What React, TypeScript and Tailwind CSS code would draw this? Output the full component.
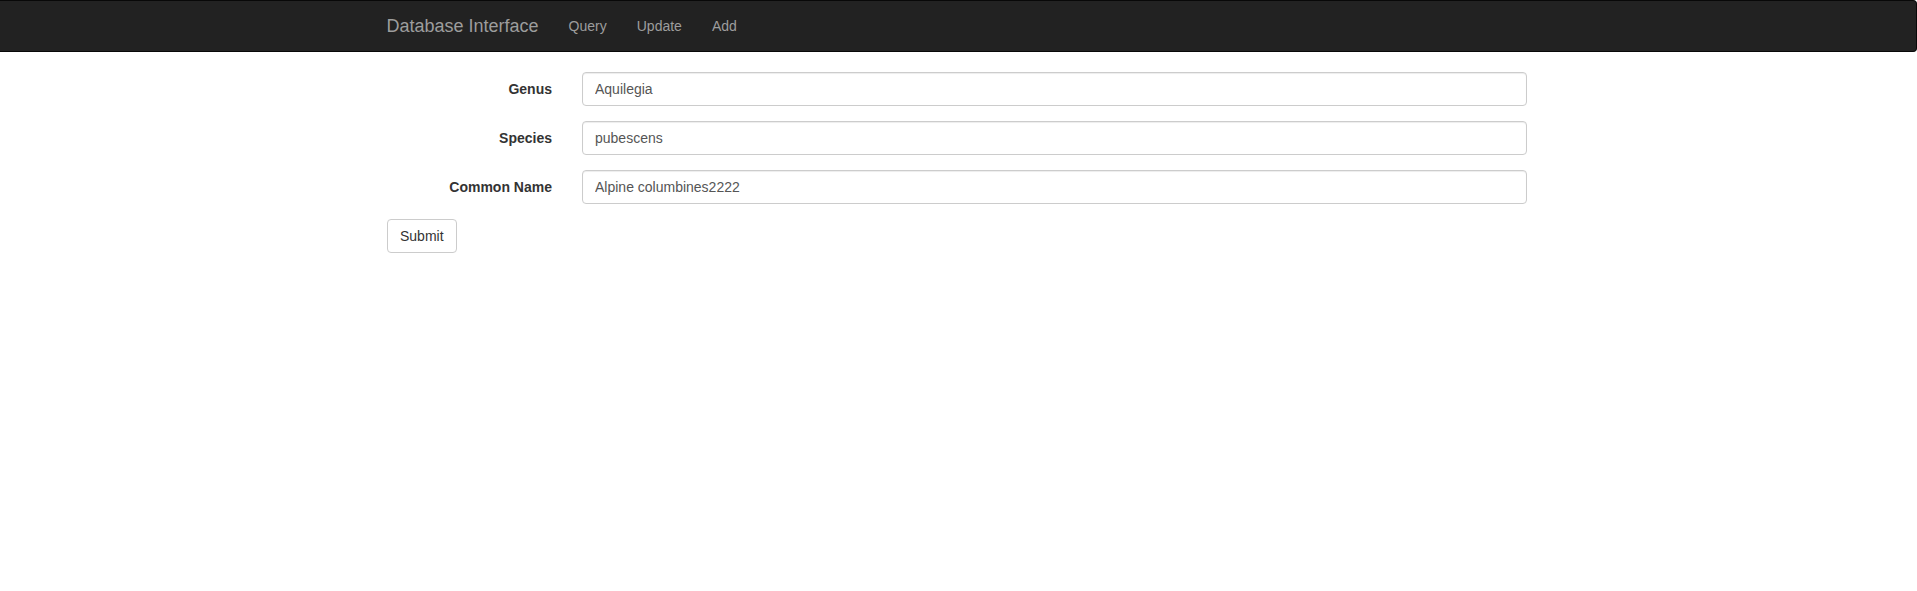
import React from "react"

const fields = [
  { label: "Genus", value: "Aquilegia" },
  { label: "Species", value: "pubescens" },
  { label: "Common Name", value: "Alpine columbines2222" },
]

export default function App(): React.ReactElement {
  return (
    <div className="min-h-[591px] bg-white pr-[3px] font-['Liberation_Sans',Arial,sans-serif] text-[14px] leading-[20px] text-[#333]">
      {/* Navbar */}
      <nav className="-mr-[3px] mb-5 h-[52px] rounded-r-[4px] border border-l-0 border-[#080808] bg-[#222] pr-[3px]">
        <div className="mx-auto flex w-[1170px] px-[15px]">
          <a className="-ml-[15px] block h-[50px] px-[15px] py-[15px] text-[18px] leading-[20px] text-[#9d9d9d]">
            Database Interface
          </a>
          <ul className="flex">
            {["Query", "Update", "Add"].map((item) => (
              <li key={item}>
                <a className="block px-[15px] py-[15px] leading-[20px] text-[#9d9d9d]">{item}</a>
              </li>
            ))}
          </ul>
        </div>
      </nav>

      {/* Form */}
      <div className="mx-auto w-[1170px] px-[15px]">
        <form>
          {fields.map((f) => (
            <div key={f.label} className="-mx-[15px] mb-[15px] flex">
              <label className="w-[195px] shrink-0 px-[15px] pt-[7px] text-right font-bold">
                {f.label}
              </label>
              <div className="flex-1 px-[15px]">
                <input
                  type="text"
                  defaultValue={f.value}
                  className="block h-[34px] w-full rounded-[4px] border border-[#ccc] bg-white px-3 py-[6px] text-[14px] text-[#555] shadow-[inset_0_1px_1px_rgba(0,0,0,0.075)] outline-none"
                />
              </div>
            </div>
          ))}
          <button
            type="button"
            className="h-[34px] rounded-[4px] border border-[#ccc] bg-white px-3 py-[6px] text-[14px] leading-[20px] text-[#333]"
          >
            Submit
          </button>
        </form>
      </div>
    </div>
  )
}
